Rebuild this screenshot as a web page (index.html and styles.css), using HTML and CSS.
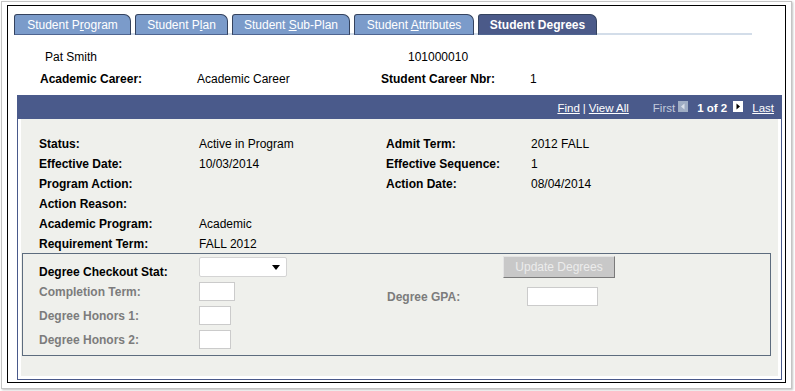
FILE: index.html
```html
<!DOCTYPE html>
<html lang="en">
<head>
  <meta charset="UTF-8">
  <title>Student Degrees</title>
  <link rel="stylesheet" href="styles.css">
</head>
<body>
  <div class="frame">
    <div class="page">
      <div class="tabs">
        <div class="tab w117">Student P<u>r</u>ogram</div>
        <div class="tab w93">Student P<u>l</u>an</div>
        <div class="tab w118">Student <u>S</u>ub-Plan</div>
        <div class="tab w120">Student <u>A</u>ttributes</div>
        <div class="tab w119 active">Student Degrees</div>
      </div>

      <div class="summary-row first">
        <span class="name">Pat Smith</span>
        <span>101000010</span>
      </div>
      <div class="summary-row second">
        <span class="lbl s157">Academic Career:</span>
        <span class="s184">Academic Career</span>
        <span class="lbl s149">Student Career Nbr:</span>
        <span>1</span>
      </div>

      <div class="scroll">
        <div class="scroll-head">
          <a class="link">Find</a>
          <span class="sep">|</span>
          <a class="link view-all">View All</a>
          <span class="muted">First</span>
          <svg class="arrow" width="10" height="11" viewBox="0 0 10 11">
            <rect width="10" height="11" fill="#9fadc4"/>
            <path d="M6.5 2.5 L3 5.5 L6.5 8.5 Z" fill="#d9e0ea"/>
          </svg>
          <span class="count">1 of 2</span>
          <svg class="arrow" width="10" height="11" viewBox="0 0 10 11">
            <rect width="10" height="11" fill="#ffffff"/>
            <path d="M3.5 2.5 L7 5.5 L3.5 8.5 Z" fill="#000000"/>
          </svg>
          <a class="link last">Last</a>
        </div>
        <div class="scroll-body">
          <div class="panel">
            <div class="fields">
              <span class="lbl">Status:</span><span>Active in Program</span>
              <span class="lbl">Admit Term:</span><span>2012 FALL</span>

              <span class="lbl">Effective Date:</span><span>10/03/2014</span>
              <span class="lbl">Effective Sequence:</span><span>1</span>

              <span class="lbl">Program Action:</span><span></span>
              <span class="lbl">Action Date:</span><span>08/04/2014</span>

              <span class="lbl">Action Reason:</span><span></span>
              <span></span><span></span>

              <span class="lbl">Academic Program:</span><span>Academic</span>
              <span></span><span></span>

              <span class="lbl">Requirement Term:</span><span>FALL 2012</span>
              <span></span><span></span>
            </div>

            <div class="group">
              <div class="group-left">
                <div class="grow">
                  <span class="lbl glabel low">Degree Checkout Stat:</span>
                  <div class="select">
                    <svg width="8" height="5" viewBox="0 0 8 5"><path d="M0 0 H8 L4 5 Z" fill="#000"/></svg>
                  </div>
                </div>
                <div class="grow">
                  <span class="lbl glabel off">Completion Term:</span>
                  <input class="box w36" type="text" disabled>
                </div>
                <div class="grow">
                  <span class="lbl glabel off">Degree Honors 1:</span>
                  <input class="box w32" type="text" disabled>
                </div>
                <div class="grow">
                  <span class="lbl glabel off">Degree Honors 2:</span>
                  <input class="box w32" type="text" disabled>
                </div>
              </div>
              <div class="group-right">
                <button class="update-btn" disabled>Update Degrees</button>
                <div class="grow gpa">
                  <span class="lbl rlabel off">Degree GPA:</span>
                  <input class="box w71" type="text" disabled>
                </div>
              </div>
            </div>
          </div>
        </div>
      </div>
    </div>
  </div>
</body>
</html>
```

FILE: styles.css
```css
* {
  box-sizing: border-box;
}

body {
  margin: 0;
  background: #fff;
  font-family: 'Liberation Sans', Arial, sans-serif;
  font-size: 12px;
  color: #000;
}

.frame {
  margin: 1px 3px 2px 1px;
  border: 1px solid #c4c4c4;
  padding: 3px 5px 5px 5px;
  box-shadow: 1px 1px 2px rgba(0, 0, 0, 0.25);
}

.page {
  border: 1px solid #000;
  padding: 8px 3px 2px 6px;
}

/* tabs */
.tabs {
  display: flex;
  gap: 4px;
  width: 738px;
  height: 21px;
  box-shadow: inset 0 -2px #d3dde9;
}

.tab {
  height: 21px;
  border: 1px solid #34425e;
  border-bottom-color: #4f6590;
  border-radius: 3px 7px 0 0;
  background-color: #7b9bca;
  color: #fff;
  text-align: center;
  line-height: 20px;
  white-space: nowrap;
}

.tab.active {
  background-color: #4b5a89;
  font-weight: bold;
}

.w117 { width: 117px; }
.w93 { width: 93px; }
.w118 { width: 118px; }
.w120 { width: 120px; }
.w119 { width: 119px; }

/* summary */
.summary-row {
  display: flex;
  line-height: 16px;
}

.summary-row.first {
  margin: 14px 0 0 31px;
}

.summary-row.second {
  margin: 6px 0 0 26px;
}

.name { width: 363px; }
.s157 { width: 157px; }
.s184 { width: 184px; }
.s149 { width: 149px; }

.lbl {
  font-weight: bold;
}

/* scroll area */
.scroll {
  margin: 8px 0 0 3px;
  width: 765px;
  border: 1px solid #4a5a8b;
}

.scroll-head {
  height: 23px;
  background-color: #4a5a8b;
  color: #fff;
  font-size: 11.5px;
  display: flex;
  justify-content: flex-end;
  align-items: center;
  padding-right: 7px;
}

.link {
  color: #fff;
  text-decoration: underline;
}

.sep {
  margin: 0 3px;
}

.view-all {
  margin-right: 24px;
}

.muted {
  color: #c3cbdc;
}

.arrow {
  margin: -3px 3px 0 3px;
}

.count {
  font-weight: bold;
  margin: 0 3px 0 6px;
}

.last {
  margin-left: 6px;
}

.scroll-body {
  background: #fff;
  padding: 0 3px 3px 3px;
}

.panel {
  background-color: #eff0ec;
  padding: 15px 0 20px 0;
}

.fields {
  display: grid;
  grid-template-columns: 160px 187px 145px auto;
  line-height: 20px;
  padding-left: 18px;
}

/* group box */
.group {
  margin: -1px 7px 0 1px;
  border: 1px solid #5d6c7e;
  padding: 3px 0 6px 16px;
  display: flex;
}

.group-left {
  width: 348px;
}

.grow {
  display: flex;
  align-items: center;
}

.grow + .grow {
  margin-top: 5px;
}

.glabel { width: 160px; }
.rlabel { width: 140px; }

.low {
  align-self: flex-end;
  line-height: 10px;
}

.off {
  color: #7c7c7c;
}

.select {
  width: 88px;
  height: 20px;
  border: 1px solid #d4d4d4;
  border-radius: 2px;
  background: #fff;
  display: flex;
  justify-content: flex-end;
  align-items: center;
  padding-right: 6px;
}

.box {
  height: 19px;
  border: 1px solid #cbcbcb;
  background: #fff;
  margin: 0;
  padding: 0;
}

.w36 { width: 36px; }
.w32 { width: 32px; }
.w71 { width: 71px; }

.update-btn {
  display: block;
  margin: -1px 0 0 116px;
  width: 112px;
  height: 22px;
  padding: 0;
  background-color: #c8c8c8;
  border: 1px solid;
  border-color: #e4e4e4 #7a7a7a #7a7a7a #e4e4e4;
  color: #ececec;
  font-family: 'Liberation Sans', Arial, sans-serif;
  font-size: 12px;
}

.grow.gpa {
  margin-top: 9px;
}
```
